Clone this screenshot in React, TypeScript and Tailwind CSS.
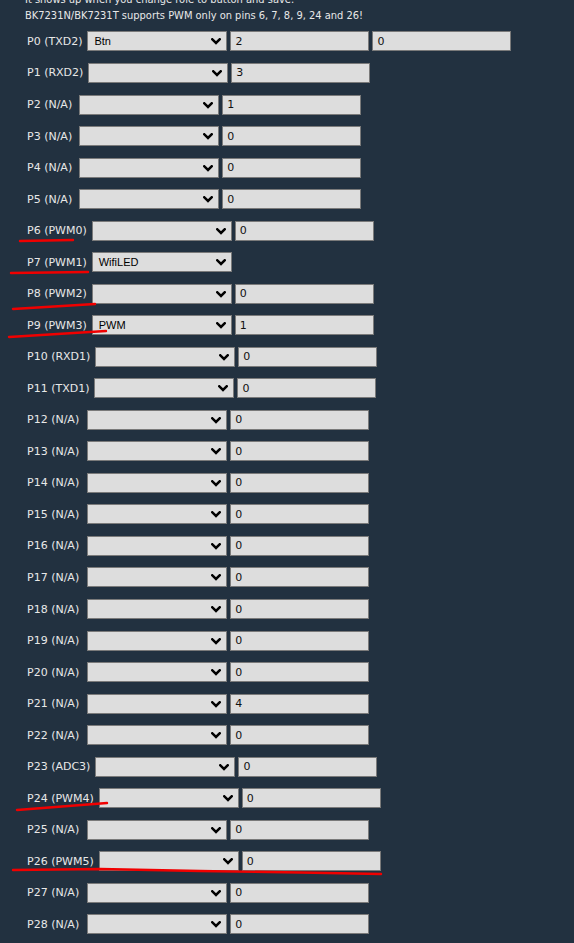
import React from "react";

type Pin = { label: string; role?: string; v1?: string; v2?: string; noInput?: boolean };

const pins: Pin[] = [
  { label: "P0 (TXD2)", role: "Btn", v1: "2", v2: "0" },
  { label: "P1 (RXD2)", v1: "3" },
  { label: "P2 (N/A)", v1: "1" },
  { label: "P3 (N/A)", v1: "0" },
  { label: "P4 (N/A)", v1: "0" },
  { label: "P5 (N/A)", v1: "0" },
  { label: "P6 (PWM0)", v1: "0" },
  { label: "P7 (PWM1)", role: "WifiLED", noInput: true },
  { label: "P8 (PWM2)", v1: "0" },
  { label: "P9 (PWM3)", role: "PWM", v1: "1" },
  { label: "P10 (RXD1)", v1: "0" },
  { label: "P11 (TXD1)", v1: "0" },
  { label: "P12 (N/A)", v1: "0" },
  { label: "P13 (N/A)", v1: "0" },
  { label: "P14 (N/A)", v1: "0" },
  { label: "P15 (N/A)", v1: "0" },
  { label: "P16 (N/A)", v1: "0" },
  { label: "P17 (N/A)", v1: "0" },
  { label: "P18 (N/A)", v1: "0" },
  { label: "P19 (N/A)", v1: "0" },
  { label: "P20 (N/A)", v1: "0" },
  { label: "P21 (N/A)", v1: "4" },
  { label: "P22 (N/A)", v1: "0" },
  { label: "P23 (ADC3)", v1: "0" },
  { label: "P24 (PWM4)", v1: "0" },
  { label: "P25 (N/A)", v1: "0" },
  { label: "P26 (PWM5)", v1: "0" },
  { label: "P27 (N/A)", v1: "0" },
  { label: "P28 (N/A)", v1: "0" },
];

function Select({ value }: { value?: string }) {
  return (
    <div className="relative w-[140px] h-[20px] shrink-0 bg-[#dddddd] border border-[#7a7a7a] flex items-center">
      <span className="pl-[6px] text-[11px] leading-none text-black font-['Liberation_Sans',Arial,sans-serif]">
        {value ?? ""}
      </span>
      <svg
        className="absolute right-[5px] top-[6px]"
        width="10"
        height="7"
        viewBox="0 0 10 7"
        fill="none"
      >
        <path d="M1.3 1.3 L5 5 L8.7 1.3" stroke="#000" strokeWidth="2.5" strokeLinecap="square" />
      </svg>
    </div>
  );
}

function Input({ value }: { value: string }) {
  return (
    <div className="w-[139px] h-[20px] shrink-0 bg-[#dddddd] border border-[#7a7a7a] flex items-center">
      <span className="pl-[4px] text-[11px] leading-none text-[#111] font-['DejaVu_Sans',sans-serif]">
        {value}
      </span>
    </div>
  );
}

const labelClass = (label: string) => {
  if (/^P\d\d \(N\/A\)$/.test(label)) return "text-[11px] leading-none text-[#e8e8e8] mr-[8px] whitespace-nowrap";
  if (/^P\d \(N\/A\)$/.test(label)) return "text-[11px] leading-none text-[#e8e8e8] mr-[7px] whitespace-nowrap";
  return "text-[11px] leading-none text-[#e8e8e8] mr-[5px] whitespace-nowrap";
};

export default function App() {
  return (
    <div className="relative min-h-screen w-full overflow-hidden bg-[#223140] font-['DejaVu_Sans',Verdana,sans-serif]">
      <div className="mt-[-8px] pl-[25px] text-[11px] leading-[16px] text-[#e8e8e8] font-['DejaVu_Sans_Condensed','DejaVu_Sans',sans-serif] font-stretch-condensed">
        <div>It shows up when you change role to button and save.</div>
        <div>BK7231N/BK7231T supports PWM only on pins 6, 7, 8, 9, 24 and 26!</div>
      </div>
      <div className="mt-[1.7px] flex flex-col">
        {pins.map((p) => (
          <div key={p.label} className="h-[31.54px] flex items-center pl-[27px]">
            <span className={labelClass(p.label)}>{p.label}</span>
            <Select value={p.role} />
            {!p.noInput && (
              <div className="flex gap-[3px] ml-[3px]">
                <Input value={p.v1 ?? "0"} />
                {p.v2 !== undefined && <Input value={p.v2} />}
              </div>
            )}
          </div>
        ))}
      </div>
      <svg
        className="absolute left-0 top-0 pointer-events-none"
        width="574"
        height="943"
        viewBox="0 0 574 943"
        fill="none"
      >
        <g stroke="#f00000" strokeWidth="2.4" strokeLinecap="round" strokeLinejoin="round">
          <path d="M20 241 L73 240" />
          <path d="M11 273 L88 272" />
          <path d="M13 309 L95 304" />
          <path d="M9 337 L106 331" />
          <path d="M17 810 L107 803" />
          <path d="M13 870 L100 869 L200 871 L300 872.5 L381 874" />
        </g>
      </svg>
    </div>
  );
}
